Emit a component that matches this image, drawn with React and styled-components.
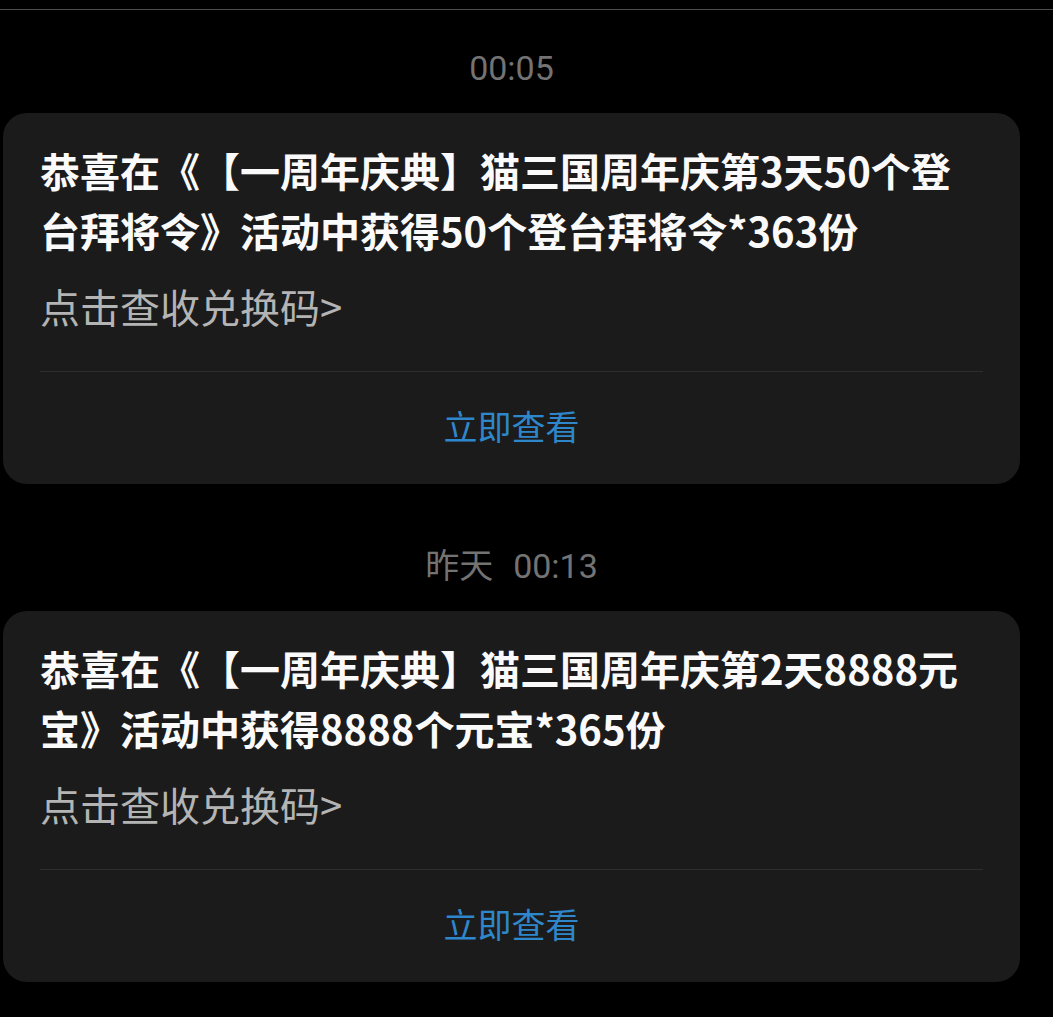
import React from 'react';
import styled, { createGlobalStyle } from 'styled-components';

const GlobalStyle = createGlobalStyle`
  html, body {
    margin: 0;
    padding: 0;
    background: #000;
  }
  body {
    font-family: "Noto Sans CJK SC", "Noto Sans", sans-serif;
    -webkit-font-smoothing: antialiased;
    text-spacing-trim: space-all;
  }
`;

const Page = styled.div`
  min-height: 1017px;
  background: #000;
  padding-top: 9px;
  box-sizing: border-box;
`;

const TopRule = styled.div`
  height: 1px;
  background: #4d4d4d;
`;

const Feed = styled.div`
  width: 1017px;
  margin-left: 3px;
  padding-top: 38px;
  display: flex;
  flex-direction: column;
  gap: 62px;
`;

const Group = styled.section`
  display: flex;
  flex-direction: column;
  gap: 25px;
`;

const Stamp = styled.div`
  text-align: center;
  font-family: Roboto, "Noto Sans CJK SC", sans-serif;
  font-size: 34px;
  line-height: 40px;
  color: #737373;

  span + span {
    margin-left: 20px;
  }
`;

const Card = styled.article`
  background: #1b1b1b;
  border-radius: 24px;
  padding: 27px 37px 0;
`;

const Title = styled.h3`
  margin: 0;
  font-size: 40px;
  line-height: 60px;
  font-weight: 700;
  color: #fafafa;
  text-spacing-trim: space-all;
`;

const Sub = styled.p`
  margin: 21px 0 0;
  font-size: 40px;
  line-height: 50px;
  font-weight: 400;
  color: #b4b4b4;
`;

const Divider = styled.div`
  margin-top: 40px;
  height: 1px;
  background: #2e2e2e;
`;

const Action = styled.button`
  display: block;
  width: 100%;
  border: none;
  background: none;
  padding: 37px 0 41px;
  font-family: "Noto Sans CJK SC", sans-serif;
  font-size: 34px;
  line-height: 34px;
  color: #2f87cb;
  cursor: pointer;
`;

const messages = [
  {
    id: 1,
    time: ['00:05'],
    title: '恭喜在《【一周年庆典】猫三国周年庆第3天50个登台拜将令》活动中获得50个登台拜将令*363份',
  },
  {
    id: 2,
    time: ['昨天', '00:13'],
    title: '恭喜在《【一周年庆典】猫三国周年庆第2天8888元宝》活动中获得8888个元宝*365份',
  },
];

const App = () => (
  <Page>
    <GlobalStyle />
    <TopRule />
    <Feed>
      {messages.map(msg => (
        <Group key={msg.id}>
          <Stamp>
            {msg.time.map(t => <span key={t}>{t}</span>)}
          </Stamp>
          <Card>
            <Title>{msg.title}</Title>
            <Sub>点击查收兑换码&gt;</Sub>
            <Divider />
            <Action>立即查看</Action>
          </Card>
        </Group>
      ))}
    </Feed>
  </Page>
);

export default App;
